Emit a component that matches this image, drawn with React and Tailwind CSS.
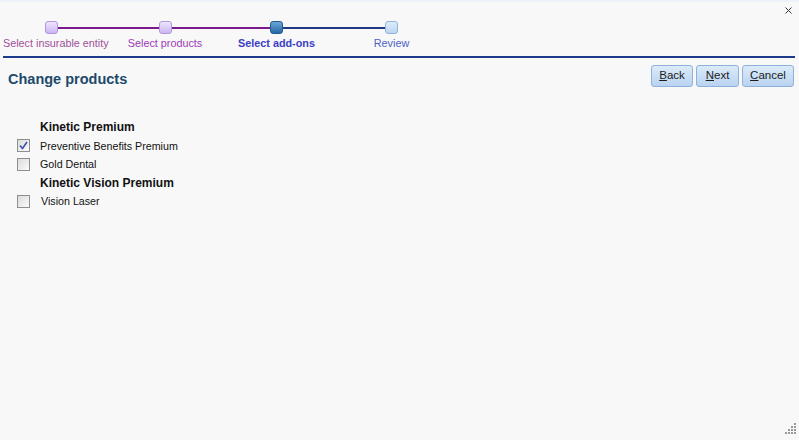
import React from 'react';

const steps = [
  { label: 'Select insurable entity', width: 'w-[103px]', node: 'done', left: null, right: 'bg-[#7b1a8c]', text: 'text-[#a0509c] self-start ml-[3px]' },
  { label: 'Select products', width: 'w-[124px]', node: 'done', left: 'bg-[#7b1a8c]', right: 'bg-[#7b1a8c]', text: 'text-[#9b3bb5]' },
  { label: 'Select add-ons', width: 'w-[99px]', node: 'current', left: 'bg-[#7b1a8c]', right: 'bg-[#1e3a80]', text: 'text-[#3a40c4] font-bold' },
  { label: 'Review', width: 'w-[131px]', node: 'todo', left: 'bg-[#1e3a80]', right: null, text: 'text-[#4b5fc6]' }
];

const nodeStyles = {
  done: 'bg-gradient-to-b from-[#efe6fd] to-[#cbb4f1] border-[#b197de]',
  current: 'bg-gradient-to-b from-[#6aa6d8] to-[#2a69a6] border-[#1f5a90]',
  todo: 'bg-gradient-to-b from-[#dfecf9] to-[#bcd5f0] border-[#8fb4dc]'
};

const Stepper = () => (
  <div className="flex">
    {steps.map((s) => (
      <div key={s.label} className={`${s.width} flex flex-col items-center`}>
        <div className="w-full h-[13px] flex items-center">
          <div className={`flex-1 h-[2px] ${s.left || ''}`} />
          <div className={`w-[13px] h-[13px] rounded-[3px] border ${nodeStyles[s.node]}`} />
          <div className={`flex-1 h-[2px] ${s.right || ''}`} />
        </div>
        <div className={`mt-[3px] text-[10.8px] leading-[13px] whitespace-nowrap ${s.text}`}>{s.label}</div>
      </div>
    ))}
  </div>
);

const Button = ({ first, rest, width }) => (
  <button className={`${width} h-[22px] rounded-[3px] border border-[#8db1d9] bg-gradient-to-b from-[#dcebfa] to-[#b9d3f0] text-[11.5px] text-[#1c1c1c] leading-none`}>
    <span className="underline">{first}</span>{rest}
  </button>
);

const Checkbox = ({ checked }) => (
  <div className="w-[13px] h-[13px] border border-[#8e8f8f] bg-gradient-to-br from-[#dcdcdc] to-[#fbfbfb] flex items-center justify-center">
    {checked && (
      <svg width="9" height="9" viewBox="0 0 9 9">
        <path d="M1 4.5 L3.5 7.5 L8 1" fill="none" stroke="#3c4fa6" strokeWidth="1.6" />
      </svg>
    )}
  </div>
);

const Row = ({ children }) => <div className="h-[18.5px] flex items-center">{children}</div>;

const Item = ({ label, checked, shift }) => (
  <Row>
    <div className="ml-[17px]">
      <Checkbox checked={checked} />
    </div>
    <span className={`${shift ? 'ml-[11px]' : 'ml-[10px]'} text-[10.7px] text-[#111]`}>{label}</span>
  </Row>
);

const Group = ({ label }) => (
  <Row>
    <span className="ml-[40px] text-[12px] font-bold text-[#111]">{label}</span>
  </Row>
);

export default function App() {
  return (
    <div className="w-[799px] h-[440px] bg-[#f8f8f8] relative overflow-hidden font-['Liberation_Sans',Arial,sans-serif]">
      <div className="h-[2px] bg-[#eef2f9]" />
      <div className="flex items-start">
        <div className="pt-[19px]">
          <Stepper />
        </div>
        <div className="ml-auto mt-[5px] mr-[7px]">
          <svg width="7" height="7" viewBox="0 0 7 7">
            <path d="M0.5 0.5 L6.5 6.5 M6.5 0.5 L0.5 6.5" stroke="#333" strokeWidth="1" />
          </svg>
        </div>
      </div>
      <div className="mt-[6px] ml-[3px] mr-[4px] h-[2px] bg-[#1e3b8b]" />
      <div className="flex items-start justify-between pt-[7px] pr-[5px]">
        <h1 className="ml-[8px] mt-[3px] text-[14.5px] leading-[22px] font-bold text-[#1b4a6b]">Change products</h1>
        <div className="flex gap-[3px]">
          <Button first="B" rest="ack" width="w-[42px]" />
          <Button first="N" rest="ext" width="w-[43px]" />
          <Button first="C" rest="ancel" width="w-[52px]" />
        </div>
      </div>
      <div className="mt-[28px] flex flex-col">
        <Group label="Kinetic Premium" />
        <Item label="Preventive Benefits Premium" checked />
        <Item label="Gold Dental" />
        <Group label="Kinetic Vision Premium" />
        <Item label="Vision Laser" shift />
      </div>
      <svg className="absolute right-[3px] bottom-[6px]" width="11" height="11" viewBox="0 0 11 11">
        {[[9, 0], [6, 3], [9, 3], [3, 6], [6, 6], [9, 6], [0, 9], [3, 9], [6, 9], [9, 9]].map(([x, y]) => (
          <rect key={`${x}-${y}`} x={x} y={y} width="2" height="2" fill="#9a9a9a" />
        ))}
      </svg>
    </div>
  );
}
